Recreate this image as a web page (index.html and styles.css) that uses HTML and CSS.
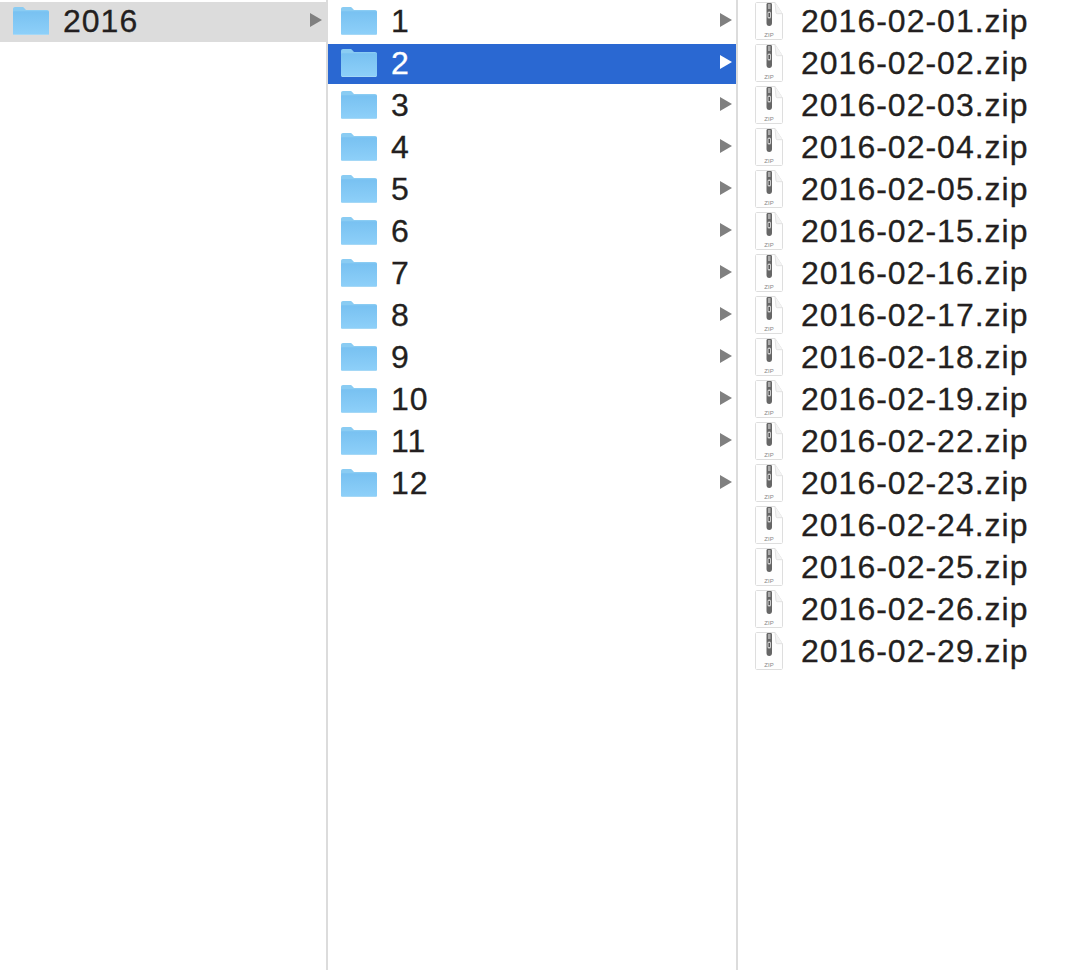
FILE: index.html
```html
<!DOCTYPE html>
<html lang="en">
<head>
    <meta charset="UTF-8">
    <meta name="viewport" content="width=device-width, initial-scale=1.0">
    <title>Finder columns</title>
    <link rel="stylesheet" href="styles.css">
</head>
<body>
    <svg class="defs" width="0" height="0">
        <defs>
            <linearGradient id="folderFront" x1="0" y1="0" x2="0" y2="1">
                <stop offset="0" stop-color="#78c1f1"/>
                <stop offset="1" stop-color="#8ed0f9"/>
            </linearGradient>
            <symbol id="folder" viewBox="0 0 36 29">
                <path d="M0 26V2C0 .8 .8 0 2 0H9c1.200 0 1.800.4 2.400 1.200L13 3H34c1.300 0 2 .7 2 2V26c0 1.300-.7 2-2 2H2C.8 28 0 27.300 0 26z" fill="#8accf3"/>
                <path d="M0 26V5.500C0 4.700 .5 4.200 1.300 4.200H34.700c.8 0 1.300.5 1.300 1.300V26c0 1.300-.7 2-2 2H2C.8 28 0 27.300 0 26z" fill="url(#folderFront)"/>
                <path d="M1 27.500H35" stroke="#a5d8f6" stroke-width="1" fill="none"/>
            </symbol>
            <symbol id="zip" viewBox="0 0 28 38">
                <path d="M.5 1.500C.5 1 1 .5 1.500 .5H20L27.500 12V36.500c0 .5-.5 1-1 1H1.500c-.5 0-1-.5-1-1z" fill="#fefefe" stroke="#dedede"/>
                <path d="M20 .5L21 10.500c.1.800.5 1.200 1.200 1.200H27.500" fill="#f4f4f4" stroke="#e2e2e2"/>
                <path d="M11.500 2.500C11.500 1.500 12 1 13 1H15.500C16.500 1 17 1.500 17 2.500V21C17 23 16 24 14.200 24S11.500 23 11.500 21z" fill="#666"/>
                <rect x="13" y="2" width="2.500" height="5" fill="#aaa"/>
                <rect x="12.500" y="9.500" width="3.500" height="7" rx="1.500" fill="#ccc"/>
                <rect x="13.500" y="11" width="1.500" height="4" fill="#555"/>
                <text x="14" y="34.500" text-anchor="middle" class="zip-label">ZIP</text>
            </symbol>
        </defs>
    </svg>

    <div class="browser">
        <div class="column column-first">
            <div class="row row-open">
                <svg class="folder"><use href="#folder"/></svg>
                <span class="name">2016</span>
                <span class="arrow"></span>
            </div>
        </div>

        <div class="column column-second">
            <div class="row"><svg class="folder"><use href="#folder"/></svg><span class="name">1</span><span class="arrow"></span></div>
            <div class="row row-selected"><svg class="folder"><use href="#folder"/></svg><span class="name">2</span><span class="arrow"></span></div>
            <div class="row"><svg class="folder"><use href="#folder"/></svg><span class="name">3</span><span class="arrow"></span></div>
            <div class="row"><svg class="folder"><use href="#folder"/></svg><span class="name">4</span><span class="arrow"></span></div>
            <div class="row"><svg class="folder"><use href="#folder"/></svg><span class="name">5</span><span class="arrow"></span></div>
            <div class="row"><svg class="folder"><use href="#folder"/></svg><span class="name">6</span><span class="arrow"></span></div>
            <div class="row"><svg class="folder"><use href="#folder"/></svg><span class="name">7</span><span class="arrow"></span></div>
            <div class="row"><svg class="folder"><use href="#folder"/></svg><span class="name">8</span><span class="arrow"></span></div>
            <div class="row"><svg class="folder"><use href="#folder"/></svg><span class="name">9</span><span class="arrow"></span></div>
            <div class="row"><svg class="folder"><use href="#folder"/></svg><span class="name">10</span><span class="arrow"></span></div>
            <div class="row"><svg class="folder"><use href="#folder"/></svg><span class="name">11</span><span class="arrow"></span></div>
            <div class="row"><svg class="folder"><use href="#folder"/></svg><span class="name">12</span><span class="arrow"></span></div>
        </div>

        <div class="column column-third">
            <div class="row"><svg class="zip"><use href="#zip"/></svg><span class="name">2016-02-01.zip</span></div>
            <div class="row"><svg class="zip"><use href="#zip"/></svg><span class="name">2016-02-02.zip</span></div>
            <div class="row"><svg class="zip"><use href="#zip"/></svg><span class="name">2016-02-03.zip</span></div>
            <div class="row"><svg class="zip"><use href="#zip"/></svg><span class="name">2016-02-04.zip</span></div>
            <div class="row"><svg class="zip"><use href="#zip"/></svg><span class="name">2016-02-05.zip</span></div>
            <div class="row"><svg class="zip"><use href="#zip"/></svg><span class="name">2016-02-15.zip</span></div>
            <div class="row"><svg class="zip"><use href="#zip"/></svg><span class="name">2016-02-16.zip</span></div>
            <div class="row"><svg class="zip"><use href="#zip"/></svg><span class="name">2016-02-17.zip</span></div>
            <div class="row"><svg class="zip"><use href="#zip"/></svg><span class="name">2016-02-18.zip</span></div>
            <div class="row"><svg class="zip"><use href="#zip"/></svg><span class="name">2016-02-19.zip</span></div>
            <div class="row"><svg class="zip"><use href="#zip"/></svg><span class="name">2016-02-22.zip</span></div>
            <div class="row"><svg class="zip"><use href="#zip"/></svg><span class="name">2016-02-23.zip</span></div>
            <div class="row"><svg class="zip"><use href="#zip"/></svg><span class="name">2016-02-24.zip</span></div>
            <div class="row"><svg class="zip"><use href="#zip"/></svg><span class="name">2016-02-25.zip</span></div>
            <div class="row"><svg class="zip"><use href="#zip"/></svg><span class="name">2016-02-26.zip</span></div>
            <div class="row"><svg class="zip"><use href="#zip"/></svg><span class="name">2016-02-29.zip</span></div>
        </div>
    </div>
</body>
</html>
```

FILE: styles.css
```css
html, body {
    margin: 0;
    padding: 0;
    height: 100%;
    background-color: #fff;
}
body {
    font-family: "Liberation Sans", Arial, sans-serif;
    color: #231f20;
    overflow: hidden;
}
.defs {
    position: absolute;
}
.zip-label {
    font-family: "Liberation Sans", Arial, sans-serif;
    font-size: 6px;
    fill: #888;
}
.browser {
    display: flex;
    height: 970px;
}
.column {
    display: flex;
    flex-direction: column;
    gap: 2px;
    padding-top: 2px;
    box-sizing: border-box;
    border-right: 2px solid #dcdcdc;
}
.column-first {
    width: 328px;
}
.column-second {
    width: 410px;
}
.column-third {
    flex: 1;
    border-right: none;
}
.row {
    display: flex;
    align-items: center;
    height: 40px;
    flex-shrink: 0;
}
.row-open {
    background-color: #dcdcdc;
}
.row-selected {
    background-color: #2a68d2;
    color: #fff;
}
.folder {
    width: 36px;
    height: 29px;
    margin-left: 13px;
    margin-bottom: 1px;
    flex-shrink: 0;
}
.zip {
    width: 28px;
    height: 38px;
    margin-left: 17px;
    margin-bottom: 2px;
    flex-shrink: 0;
}
.name {
    font-size: 32px;
    letter-spacing: 1px;
    -webkit-text-stroke: 0.3px currentColor;
    margin-left: 14px;
    margin-bottom: 2px;
    flex: 1;
}
.zip + .name {
    margin-left: 18px;
}
.arrow {
    width: 0;
    height: 0;
    margin-right: 4px;
    margin-bottom: 4px;
    border-left: 12px solid #808080;
    border-top: 7px solid transparent;
    border-bottom: 7px solid transparent;
}
.row-selected .arrow {
    border-left-color: #fff;
}
```
